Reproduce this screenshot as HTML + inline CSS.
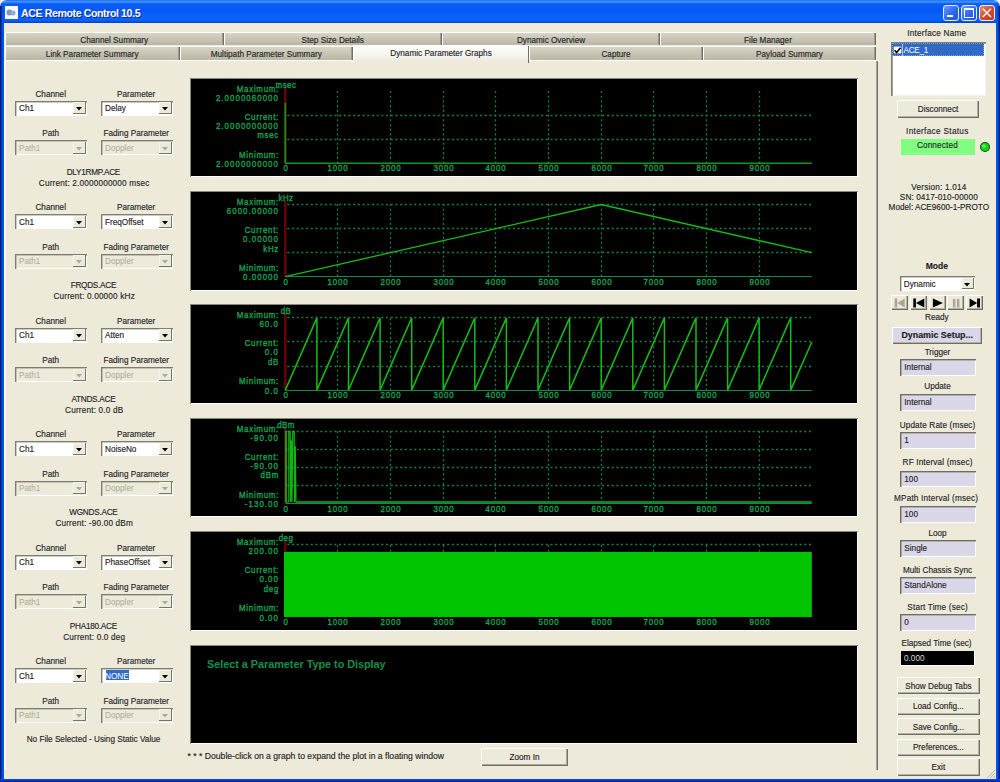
<!DOCTYPE html><html><head><meta charset="utf-8"><style>
html,body{margin:0;padding:0;width:1000px;height:782px;overflow:hidden;background:#EDEADA;}
.t{position:absolute;z-index:5;white-space:nowrap;line-height:0;font-family:"Liberation Sans", sans-serif;}
.r{position:absolute;box-sizing:border-box;}
</style></head><body>
<div class="r" style="left:0px;top:0px;width:1000px;height:782px;background:#EDEADA;"></div>
<div class="r" style="left:0px;top:0px;width:1000px;height:23px;background:linear-gradient(to bottom,#1F6CF0 0%,#3C8EFF 6%,#3A8AFF 10%,#0A5EF6 16%,#0558F2 45%,#0A62FA 70%,#0A62FA 88%,#0040C8 100%);border-radius:7px 7px 0 0;"></div>
<div class="r" style="left:0px;top:6px;width:4px;height:776px;background:linear-gradient(to right,#0A1E78 0%,#0A1E78 35%,#0050E0 40%,#0058EE 100%);"></div>
<div class="r" style="left:996px;top:6px;width:4px;height:776px;background:linear-gradient(to left,#0A1E78 0%,#0A1E78 35%,#0050E0 40%,#0058EE 100%);"></div>
<div class="r" style="left:0px;top:779px;width:1000px;height:3px;background:linear-gradient(to bottom,#0055E5,#0019A8);"></div>
<div class="r" style="left:5px;top:6px;width:13px;height:13px;background:#F8F8FF;"></div>
<svg style="position:absolute;left:6px;top:8px" width="11" height="9"><circle cx="3.5" cy="4.5" r="3" fill="#7E95C8"/><circle cx="7" cy="5" r="2.5" fill="#97AAD8"/></svg>
<div class="t" style="left:21.00px;top:13.00px;font-size:10.6px;color:#fff;font-weight:bold;text-shadow:1px 1px 0 #0A2A9A;letter-spacing:-0.4px;">ACE Remote Control 10.5</div>
<div class="r" style="left:943px;top:5px;width:16px;height:16px;background:linear-gradient(135deg,#6F9BFF,#2B67F0 55%,#1F55DC);border:1px solid #E8EEFF;border-radius:3px;"></div>
<div class="r" style="left:961px;top:5px;width:16px;height:16px;background:linear-gradient(135deg,#6F9BFF,#2B67F0 55%,#1F55DC);border:1px solid #E8EEFF;border-radius:3px;"></div>
<div class="r" style="left:979px;top:5px;width:16px;height:16px;background:linear-gradient(135deg,#E88A6A,#D4492A 55%,#C83A1C);border:1px solid #E8EEFF;border-radius:3px;"></div>
<div class="r" style="left:947px;top:15px;width:6px;height:2px;background:#fff;"></div>
<div class="r" style="left:964px;top:8px;width:10px;height:10px;background:transparent;border:1px solid #fff;border-top:2px solid #fff;"></div>
<svg style="position:absolute;left:979px;top:5px" width="16" height="16"><path d="M3.8 3.8 L12 12 M12 3.8 L3.8 12" stroke="#fff" stroke-width="1.4"/></svg>
<div class="r" style="left:4px;top:60px;width:874px;height:710px;background:#EDEADA;box-shadow: inset 1.5px 1px 0 #fff, inset -1px 0 0 #716F64, inset -2px 0 0 #ACA899;"></div>
<div class="r" style="left:5px;top:32px;width:871px;height:1px;background:#fff;"></div>
<div class="r" style="left:5px;top:32px;width:218.5px;height:13px;background:linear-gradient(to bottom,#DAD7C8,#C9C6B6 50%,#BAB6A6);box-shadow: inset 1px 1px 0 #fff, inset -1px 0 0 #716F64, inset -2px 0 0 #9D9A8C;"></div>
<div class="t" style="left:-85.75px;width:400px;text-align:center;top:41.00px;font-size:8.2px;color:#1A1A1A;font-weight:normal;-webkit-text-stroke:0.15px #333;">Channel Summary</div>
<div class="r" style="left:223.5px;top:32px;width:218.5px;height:13px;background:linear-gradient(to bottom,#DAD7C8,#C9C6B6 50%,#BAB6A6);box-shadow: inset 1px 1px 0 #fff, inset -1px 0 0 #716F64, inset -2px 0 0 #9D9A8C;"></div>
<div class="t" style="left:132.75px;width:400px;text-align:center;top:41.00px;font-size:8.2px;color:#1A1A1A;font-weight:normal;-webkit-text-stroke:0.15px #333;">Step Size Details</div>
<div class="r" style="left:442px;top:32px;width:218px;height:13px;background:linear-gradient(to bottom,#DAD7C8,#C9C6B6 50%,#BAB6A6);box-shadow: inset 1px 1px 0 #fff, inset -1px 0 0 #716F64, inset -2px 0 0 #9D9A8C;"></div>
<div class="t" style="left:351.00px;width:400px;text-align:center;top:41.00px;font-size:8.2px;color:#1A1A1A;font-weight:normal;-webkit-text-stroke:0.15px #333;">Dynamic Overview</div>
<div class="r" style="left:660px;top:32px;width:216px;height:13px;background:linear-gradient(to bottom,#DAD7C8,#C9C6B6 50%,#BAB6A6);box-shadow: inset 1px 1px 0 #fff, inset -1px 0 0 #716F64, inset -2px 0 0 #9D9A8C;"></div>
<div class="t" style="left:568.00px;width:400px;text-align:center;top:41.00px;font-size:8.2px;color:#1A1A1A;font-weight:normal;-webkit-text-stroke:0.15px #333;">File Manager</div>
<div class="r" style="left:5px;top:46px;width:174.5px;height:13.5px;background:linear-gradient(to bottom,#DAD7C8,#C9C6B6 50%,#BAB6A6);box-shadow: inset 1px 1px 0 #fff, inset -1px 0 0 #716F64, inset -2px 0 0 #9D9A8C;"></div>
<div class="t" style="left:-107.75px;width:400px;text-align:center;top:55.00px;font-size:8.2px;color:#1A1A1A;font-weight:normal;-webkit-text-stroke:0.15px #333;">Link Parameter Summary</div>
<div class="r" style="left:179.5px;top:46px;width:173.5px;height:13.5px;background:linear-gradient(to bottom,#DAD7C8,#C9C6B6 50%,#BAB6A6);box-shadow: inset 1px 1px 0 #fff, inset -1px 0 0 #716F64, inset -2px 0 0 #9D9A8C;"></div>
<div class="t" style="left:66.25px;width:400px;text-align:center;top:55.00px;font-size:8.2px;color:#1A1A1A;font-weight:normal;-webkit-text-stroke:0.15px #333;">Multipath Parameter Summary</div>
<div class="r" style="left:529px;top:46px;width:174px;height:13.5px;background:linear-gradient(to bottom,#DAD7C8,#C9C6B6 50%,#BAB6A6);box-shadow: inset 1px 1px 0 #fff, inset -1px 0 0 #716F64, inset -2px 0 0 #9D9A8C;"></div>
<div class="t" style="left:416.00px;width:400px;text-align:center;top:55.00px;font-size:8.2px;color:#1A1A1A;font-weight:normal;-webkit-text-stroke:0.15px #333;">Capture</div>
<div class="r" style="left:703px;top:46px;width:173px;height:13.5px;background:linear-gradient(to bottom,#DAD7C8,#C9C6B6 50%,#BAB6A6);box-shadow: inset 1px 1px 0 #fff, inset -1px 0 0 #716F64, inset -2px 0 0 #9D9A8C;"></div>
<div class="t" style="left:589.50px;width:400px;text-align:center;top:55.00px;font-size:8.2px;color:#1A1A1A;font-weight:normal;-webkit-text-stroke:0.15px #333;">Payload Summary</div>
<div class="r" style="left:353px;top:44.5px;width:176px;height:18.5px;background:linear-gradient(to bottom,#FFFFFF,#F7F6F1 50%,#ECE9D8);box-shadow: inset 1px 1px 0 #fff, inset -1px 0 0 #716F64;"></div>
<div class="t" style="left:241.00px;width:400px;text-align:center;top:54.00px;font-size:8.2px;color:#1A1A1A;font-weight:normal;-webkit-text-stroke:0.15px #333;">Dynamic Parameter Graphs</div>
<div class="t" style="left:-149.30px;width:400px;text-align:center;top:95.00px;font-size:8.2px;color:#1A1A1A;font-weight:normal;-webkit-text-stroke:0.15px #333;">Channel</div>
<div class="t" style="left:-63.80px;width:400px;text-align:center;top:95.00px;font-size:8.2px;color:#1A1A1A;font-weight:normal;-webkit-text-stroke:0.15px #333;">Parameter</div>
<div class="r" style="left:15px;top:100.6px;width:71.5px;height:15.400000000000006px;background:#FFFFFF;box-shadow: inset 1px 1px 0 #7F7D70, inset 1.5px 1.5px 0 #9A988B, inset -1px -1px 0 #FFFFFF;"></div>
<div class="r" style="left:73.0px;top:102.1px;width:12.5px;height:12.400000000000006px;background:#EDEADA;box-shadow: inset -1px -1px 0 #77756A, inset 1px 1px 0 #F4F3EC;"></div>
<svg style="position:absolute;left:75.75px;top:107.30px" width="6" height="4"><path d="M0 0 L6 0 L3 3.6 Z" fill="#000"/></svg>
<div class="t" style="left:19.00px;top:109.00px;font-size:8.2px;color:#1A1A1A;font-weight:normal;-webkit-text-stroke:0.15px #333;">Ch1</div>
<div class="r" style="left:101px;top:100.6px;width:71.5px;height:15.400000000000006px;background:#FFFFFF;box-shadow: inset 1px 1px 0 #7F7D70, inset 1.5px 1.5px 0 #9A988B, inset -1px -1px 0 #FFFFFF;"></div>
<div class="r" style="left:159.0px;top:102.1px;width:12.5px;height:12.400000000000006px;background:#EDEADA;box-shadow: inset -1px -1px 0 #77756A, inset 1px 1px 0 #F4F3EC;"></div>
<svg style="position:absolute;left:161.75px;top:107.30px" width="6" height="4"><path d="M0 0 L6 0 L3 3.6 Z" fill="#000"/></svg>
<div class="t" style="left:105.00px;top:109.00px;font-size:8.2px;color:#1A1A1A;font-weight:normal;-webkit-text-stroke:0.15px #333;">Delay</div>
<div class="t" style="left:-149.30px;width:400px;text-align:center;top:134.00px;font-size:8.2px;color:#1A1A1A;font-weight:normal;-webkit-text-stroke:0.15px #333;">Path</div>
<div class="t" style="left:-63.80px;width:400px;text-align:center;top:134.00px;font-size:8.2px;color:#1A1A1A;font-weight:normal;-webkit-text-stroke:0.15px #333;">Fading Parameter</div>
<div class="r" style="left:15px;top:140.0px;width:71.5px;height:15.400000000000006px;background:#EDEADA;box-shadow: inset 1px 1px 0 #7F7D70, inset 1.5px 1.5px 0 #9A988B, inset -1px -1px 0 #FFFFFF;"></div>
<div class="r" style="left:73.0px;top:141.5px;width:12.5px;height:12.400000000000006px;background:#EDEADA;box-shadow: inset -1px -1px 0 #77756A, inset 1px 1px 0 #F4F3EC;"></div>
<svg style="position:absolute;left:75.75px;top:146.70px" width="6" height="4"><path d="M0 0 L6 0 L3 3.6 Z" fill="#ACA899"/></svg>
<div class="t" style="left:19.00px;top:149.00px;font-size:8.2px;color:#ACA899;font-weight:normal;">Path1</div>
<div class="r" style="left:101px;top:140.0px;width:71.5px;height:15.400000000000006px;background:#EDEADA;box-shadow: inset 1px 1px 0 #7F7D70, inset 1.5px 1.5px 0 #9A988B, inset -1px -1px 0 #FFFFFF;"></div>
<div class="r" style="left:159.0px;top:141.5px;width:12.5px;height:12.400000000000006px;background:#EDEADA;box-shadow: inset -1px -1px 0 #77756A, inset 1px 1px 0 #F4F3EC;"></div>
<svg style="position:absolute;left:161.75px;top:146.70px" width="6" height="4"><path d="M0 0 L6 0 L3 3.6 Z" fill="#ACA899"/></svg>
<div class="t" style="left:105.00px;top:149.00px;font-size:8.2px;color:#ACA899;font-weight:normal;">Doppler</div>
<div class="t" style="left:-106.62px;width:400px;text-align:center;top:173.00px;font-size:8.2px;color:#1A1A1A;font-weight:normal;letter-spacing:-0.25px;-webkit-text-stroke:0.15px #333;">DLY1RMP.ACE</div>
<div class="t" style="left:-105.81px;width:400px;text-align:center;top:184.00px;font-size:8.2px;color:#1A1A1A;font-weight:normal;letter-spacing:0.18px;-webkit-text-stroke:0.15px #333;">Current: 2.0000000000 msec</div>
<div class="t" style="left:-149.30px;width:400px;text-align:center;top:208.00px;font-size:8.2px;color:#1A1A1A;font-weight:normal;-webkit-text-stroke:0.15px #333;">Channel</div>
<div class="t" style="left:-63.80px;width:400px;text-align:center;top:208.00px;font-size:8.2px;color:#1A1A1A;font-weight:normal;-webkit-text-stroke:0.15px #333;">Parameter</div>
<div class="r" style="left:15px;top:214.1px;width:71.5px;height:15.400000000000006px;background:#FFFFFF;box-shadow: inset 1px 1px 0 #7F7D70, inset 1.5px 1.5px 0 #9A988B, inset -1px -1px 0 #FFFFFF;"></div>
<div class="r" style="left:73.0px;top:215.6px;width:12.5px;height:12.400000000000006px;background:#EDEADA;box-shadow: inset -1px -1px 0 #77756A, inset 1px 1px 0 #F4F3EC;"></div>
<svg style="position:absolute;left:75.75px;top:220.80px" width="6" height="4"><path d="M0 0 L6 0 L3 3.6 Z" fill="#000"/></svg>
<div class="t" style="left:19.00px;top:223.00px;font-size:8.2px;color:#1A1A1A;font-weight:normal;-webkit-text-stroke:0.15px #333;">Ch1</div>
<div class="r" style="left:101px;top:214.1px;width:71.5px;height:15.400000000000006px;background:#FFFFFF;box-shadow: inset 1px 1px 0 #7F7D70, inset 1.5px 1.5px 0 #9A988B, inset -1px -1px 0 #FFFFFF;"></div>
<div class="r" style="left:159.0px;top:215.6px;width:12.5px;height:12.400000000000006px;background:#EDEADA;box-shadow: inset -1px -1px 0 #77756A, inset 1px 1px 0 #F4F3EC;"></div>
<svg style="position:absolute;left:161.75px;top:220.80px" width="6" height="4"><path d="M0 0 L6 0 L3 3.6 Z" fill="#000"/></svg>
<div class="t" style="left:105.00px;top:223.00px;font-size:8.2px;color:#1A1A1A;font-weight:normal;-webkit-text-stroke:0.15px #333;">FreqOffset</div>
<div class="t" style="left:-149.30px;width:400px;text-align:center;top:248.00px;font-size:8.2px;color:#1A1A1A;font-weight:normal;-webkit-text-stroke:0.15px #333;">Path</div>
<div class="t" style="left:-63.80px;width:400px;text-align:center;top:248.00px;font-size:8.2px;color:#1A1A1A;font-weight:normal;-webkit-text-stroke:0.15px #333;">Fading Parameter</div>
<div class="r" style="left:15px;top:253.5px;width:71.5px;height:15.399999999999977px;background:#EDEADA;box-shadow: inset 1px 1px 0 #7F7D70, inset 1.5px 1.5px 0 #9A988B, inset -1px -1px 0 #FFFFFF;"></div>
<div class="r" style="left:73.0px;top:255.0px;width:12.5px;height:12.399999999999977px;background:#EDEADA;box-shadow: inset -1px -1px 0 #77756A, inset 1px 1px 0 #F4F3EC;"></div>
<svg style="position:absolute;left:75.75px;top:260.20px" width="6" height="4"><path d="M0 0 L6 0 L3 3.6 Z" fill="#ACA899"/></svg>
<div class="t" style="left:19.00px;top:262.00px;font-size:8.2px;color:#ACA899;font-weight:normal;">Path1</div>
<div class="r" style="left:101px;top:253.5px;width:71.5px;height:15.399999999999977px;background:#EDEADA;box-shadow: inset 1px 1px 0 #7F7D70, inset 1.5px 1.5px 0 #9A988B, inset -1px -1px 0 #FFFFFF;"></div>
<div class="r" style="left:159.0px;top:255.0px;width:12.5px;height:12.399999999999977px;background:#EDEADA;box-shadow: inset -1px -1px 0 #77756A, inset 1px 1px 0 #F4F3EC;"></div>
<svg style="position:absolute;left:161.75px;top:260.20px" width="6" height="4"><path d="M0 0 L6 0 L3 3.6 Z" fill="#ACA899"/></svg>
<div class="t" style="left:105.00px;top:262.00px;font-size:8.2px;color:#ACA899;font-weight:normal;">Doppler</div>
<div class="t" style="left:-106.62px;width:400px;text-align:center;top:286.00px;font-size:8.2px;color:#1A1A1A;font-weight:normal;letter-spacing:-0.25px;-webkit-text-stroke:0.15px #333;">FRQDS.ACE</div>
<div class="t" style="left:-105.81px;width:400px;text-align:center;top:297.00px;font-size:8.2px;color:#1A1A1A;font-weight:normal;letter-spacing:0.18px;-webkit-text-stroke:0.15px #333;">Current: 0.00000 kHz</div>
<div class="t" style="left:-149.30px;width:400px;text-align:center;top:322.00px;font-size:8.2px;color:#1A1A1A;font-weight:normal;-webkit-text-stroke:0.15px #333;">Channel</div>
<div class="t" style="left:-63.80px;width:400px;text-align:center;top:322.00px;font-size:8.2px;color:#1A1A1A;font-weight:normal;-webkit-text-stroke:0.15px #333;">Parameter</div>
<div class="r" style="left:15px;top:327.6px;width:71.5px;height:15.399999999999977px;background:#FFFFFF;box-shadow: inset 1px 1px 0 #7F7D70, inset 1.5px 1.5px 0 #9A988B, inset -1px -1px 0 #FFFFFF;"></div>
<div class="r" style="left:73.0px;top:329.1px;width:12.5px;height:12.399999999999977px;background:#EDEADA;box-shadow: inset -1px -1px 0 #77756A, inset 1px 1px 0 #F4F3EC;"></div>
<svg style="position:absolute;left:75.75px;top:334.30px" width="6" height="4"><path d="M0 0 L6 0 L3 3.6 Z" fill="#000"/></svg>
<div class="t" style="left:19.00px;top:336.00px;font-size:8.2px;color:#1A1A1A;font-weight:normal;-webkit-text-stroke:0.15px #333;">Ch1</div>
<div class="r" style="left:101px;top:327.6px;width:71.5px;height:15.399999999999977px;background:#FFFFFF;box-shadow: inset 1px 1px 0 #7F7D70, inset 1.5px 1.5px 0 #9A988B, inset -1px -1px 0 #FFFFFF;"></div>
<div class="r" style="left:159.0px;top:329.1px;width:12.5px;height:12.399999999999977px;background:#EDEADA;box-shadow: inset -1px -1px 0 #77756A, inset 1px 1px 0 #F4F3EC;"></div>
<svg style="position:absolute;left:161.75px;top:334.30px" width="6" height="4"><path d="M0 0 L6 0 L3 3.6 Z" fill="#000"/></svg>
<div class="t" style="left:105.00px;top:336.00px;font-size:8.2px;color:#1A1A1A;font-weight:normal;-webkit-text-stroke:0.15px #333;">Atten</div>
<div class="t" style="left:-149.30px;width:400px;text-align:center;top:361.00px;font-size:8.2px;color:#1A1A1A;font-weight:normal;-webkit-text-stroke:0.15px #333;">Path</div>
<div class="t" style="left:-63.80px;width:400px;text-align:center;top:361.00px;font-size:8.2px;color:#1A1A1A;font-weight:normal;-webkit-text-stroke:0.15px #333;">Fading Parameter</div>
<div class="r" style="left:15px;top:367.0px;width:71.5px;height:15.399999999999977px;background:#EDEADA;box-shadow: inset 1px 1px 0 #7F7D70, inset 1.5px 1.5px 0 #9A988B, inset -1px -1px 0 #FFFFFF;"></div>
<div class="r" style="left:73.0px;top:368.5px;width:12.5px;height:12.399999999999977px;background:#EDEADA;box-shadow: inset -1px -1px 0 #77756A, inset 1px 1px 0 #F4F3EC;"></div>
<svg style="position:absolute;left:75.75px;top:373.70px" width="6" height="4"><path d="M0 0 L6 0 L3 3.6 Z" fill="#ACA899"/></svg>
<div class="t" style="left:19.00px;top:376.00px;font-size:8.2px;color:#ACA899;font-weight:normal;">Path1</div>
<div class="r" style="left:101px;top:367.0px;width:71.5px;height:15.399999999999977px;background:#EDEADA;box-shadow: inset 1px 1px 0 #7F7D70, inset 1.5px 1.5px 0 #9A988B, inset -1px -1px 0 #FFFFFF;"></div>
<div class="r" style="left:159.0px;top:368.5px;width:12.5px;height:12.399999999999977px;background:#EDEADA;box-shadow: inset -1px -1px 0 #77756A, inset 1px 1px 0 #F4F3EC;"></div>
<svg style="position:absolute;left:161.75px;top:373.70px" width="6" height="4"><path d="M0 0 L6 0 L3 3.6 Z" fill="#ACA899"/></svg>
<div class="t" style="left:105.00px;top:376.00px;font-size:8.2px;color:#ACA899;font-weight:normal;">Doppler</div>
<div class="t" style="left:-106.62px;width:400px;text-align:center;top:400.00px;font-size:8.2px;color:#1A1A1A;font-weight:normal;letter-spacing:-0.25px;-webkit-text-stroke:0.15px #333;">ATNDS.ACE</div>
<div class="t" style="left:-105.81px;width:400px;text-align:center;top:411.00px;font-size:8.2px;color:#1A1A1A;font-weight:normal;letter-spacing:0.18px;-webkit-text-stroke:0.15px #333;">Current: 0.0 dB</div>
<div class="t" style="left:-149.30px;width:400px;text-align:center;top:435.00px;font-size:8.2px;color:#1A1A1A;font-weight:normal;-webkit-text-stroke:0.15px #333;">Channel</div>
<div class="t" style="left:-63.80px;width:400px;text-align:center;top:435.00px;font-size:8.2px;color:#1A1A1A;font-weight:normal;-webkit-text-stroke:0.15px #333;">Parameter</div>
<div class="r" style="left:15px;top:441.1px;width:71.5px;height:15.399999999999977px;background:#FFFFFF;box-shadow: inset 1px 1px 0 #7F7D70, inset 1.5px 1.5px 0 #9A988B, inset -1px -1px 0 #FFFFFF;"></div>
<div class="r" style="left:73.0px;top:442.6px;width:12.5px;height:12.399999999999977px;background:#EDEADA;box-shadow: inset -1px -1px 0 #77756A, inset 1px 1px 0 #F4F3EC;"></div>
<svg style="position:absolute;left:75.75px;top:447.80px" width="6" height="4"><path d="M0 0 L6 0 L3 3.6 Z" fill="#000"/></svg>
<div class="t" style="left:19.00px;top:450.00px;font-size:8.2px;color:#1A1A1A;font-weight:normal;-webkit-text-stroke:0.15px #333;">Ch1</div>
<div class="r" style="left:101px;top:441.1px;width:71.5px;height:15.399999999999977px;background:#FFFFFF;box-shadow: inset 1px 1px 0 #7F7D70, inset 1.5px 1.5px 0 #9A988B, inset -1px -1px 0 #FFFFFF;"></div>
<div class="r" style="left:159.0px;top:442.6px;width:12.5px;height:12.399999999999977px;background:#EDEADA;box-shadow: inset -1px -1px 0 #77756A, inset 1px 1px 0 #F4F3EC;"></div>
<svg style="position:absolute;left:161.75px;top:447.80px" width="6" height="4"><path d="M0 0 L6 0 L3 3.6 Z" fill="#000"/></svg>
<div class="t" style="left:105.00px;top:450.00px;font-size:8.2px;color:#1A1A1A;font-weight:normal;-webkit-text-stroke:0.15px #333;">NoiseNo</div>
<div class="t" style="left:-149.30px;width:400px;text-align:center;top:475.00px;font-size:8.2px;color:#1A1A1A;font-weight:normal;-webkit-text-stroke:0.15px #333;">Path</div>
<div class="t" style="left:-63.80px;width:400px;text-align:center;top:475.00px;font-size:8.2px;color:#1A1A1A;font-weight:normal;-webkit-text-stroke:0.15px #333;">Fading Parameter</div>
<div class="r" style="left:15px;top:480.5px;width:71.5px;height:15.399999999999977px;background:#EDEADA;box-shadow: inset 1px 1px 0 #7F7D70, inset 1.5px 1.5px 0 #9A988B, inset -1px -1px 0 #FFFFFF;"></div>
<div class="r" style="left:73.0px;top:482.0px;width:12.5px;height:12.399999999999977px;background:#EDEADA;box-shadow: inset -1px -1px 0 #77756A, inset 1px 1px 0 #F4F3EC;"></div>
<svg style="position:absolute;left:75.75px;top:487.20px" width="6" height="4"><path d="M0 0 L6 0 L3 3.6 Z" fill="#ACA899"/></svg>
<div class="t" style="left:19.00px;top:489.00px;font-size:8.2px;color:#ACA899;font-weight:normal;">Path1</div>
<div class="r" style="left:101px;top:480.5px;width:71.5px;height:15.399999999999977px;background:#EDEADA;box-shadow: inset 1px 1px 0 #7F7D70, inset 1.5px 1.5px 0 #9A988B, inset -1px -1px 0 #FFFFFF;"></div>
<div class="r" style="left:159.0px;top:482.0px;width:12.5px;height:12.399999999999977px;background:#EDEADA;box-shadow: inset -1px -1px 0 #77756A, inset 1px 1px 0 #F4F3EC;"></div>
<svg style="position:absolute;left:161.75px;top:487.20px" width="6" height="4"><path d="M0 0 L6 0 L3 3.6 Z" fill="#ACA899"/></svg>
<div class="t" style="left:105.00px;top:489.00px;font-size:8.2px;color:#ACA899;font-weight:normal;">Doppler</div>
<div class="t" style="left:-106.62px;width:400px;text-align:center;top:513.00px;font-size:8.2px;color:#1A1A1A;font-weight:normal;letter-spacing:-0.25px;-webkit-text-stroke:0.15px #333;">WGNDS.ACE</div>
<div class="t" style="left:-105.81px;width:400px;text-align:center;top:524.00px;font-size:8.2px;color:#1A1A1A;font-weight:normal;letter-spacing:0.18px;-webkit-text-stroke:0.15px #333;">Current: -90.00 dBm</div>
<div class="t" style="left:-149.30px;width:400px;text-align:center;top:549.00px;font-size:8.2px;color:#1A1A1A;font-weight:normal;-webkit-text-stroke:0.15px #333;">Channel</div>
<div class="t" style="left:-63.80px;width:400px;text-align:center;top:549.00px;font-size:8.2px;color:#1A1A1A;font-weight:normal;-webkit-text-stroke:0.15px #333;">Parameter</div>
<div class="r" style="left:15px;top:554.6px;width:71.5px;height:15.399999999999977px;background:#FFFFFF;box-shadow: inset 1px 1px 0 #7F7D70, inset 1.5px 1.5px 0 #9A988B, inset -1px -1px 0 #FFFFFF;"></div>
<div class="r" style="left:73.0px;top:556.1px;width:12.5px;height:12.399999999999977px;background:#EDEADA;box-shadow: inset -1px -1px 0 #77756A, inset 1px 1px 0 #F4F3EC;"></div>
<svg style="position:absolute;left:75.75px;top:561.30px" width="6" height="4"><path d="M0 0 L6 0 L3 3.6 Z" fill="#000"/></svg>
<div class="t" style="left:19.00px;top:563.00px;font-size:8.2px;color:#1A1A1A;font-weight:normal;-webkit-text-stroke:0.15px #333;">Ch1</div>
<div class="r" style="left:101px;top:554.6px;width:71.5px;height:15.399999999999977px;background:#FFFFFF;box-shadow: inset 1px 1px 0 #7F7D70, inset 1.5px 1.5px 0 #9A988B, inset -1px -1px 0 #FFFFFF;"></div>
<div class="r" style="left:159.0px;top:556.1px;width:12.5px;height:12.399999999999977px;background:#EDEADA;box-shadow: inset -1px -1px 0 #77756A, inset 1px 1px 0 #F4F3EC;"></div>
<svg style="position:absolute;left:161.75px;top:561.30px" width="6" height="4"><path d="M0 0 L6 0 L3 3.6 Z" fill="#000"/></svg>
<div class="t" style="left:105.00px;top:563.00px;font-size:8.2px;color:#1A1A1A;font-weight:normal;-webkit-text-stroke:0.15px #333;">PhaseOffset</div>
<div class="t" style="left:-149.30px;width:400px;text-align:center;top:588.00px;font-size:8.2px;color:#1A1A1A;font-weight:normal;-webkit-text-stroke:0.15px #333;">Path</div>
<div class="t" style="left:-63.80px;width:400px;text-align:center;top:588.00px;font-size:8.2px;color:#1A1A1A;font-weight:normal;-webkit-text-stroke:0.15px #333;">Fading Parameter</div>
<div class="r" style="left:15px;top:594.0px;width:71.5px;height:15.399999999999977px;background:#EDEADA;box-shadow: inset 1px 1px 0 #7F7D70, inset 1.5px 1.5px 0 #9A988B, inset -1px -1px 0 #FFFFFF;"></div>
<div class="r" style="left:73.0px;top:595.5px;width:12.5px;height:12.399999999999977px;background:#EDEADA;box-shadow: inset -1px -1px 0 #77756A, inset 1px 1px 0 #F4F3EC;"></div>
<svg style="position:absolute;left:75.75px;top:600.70px" width="6" height="4"><path d="M0 0 L6 0 L3 3.6 Z" fill="#ACA899"/></svg>
<div class="t" style="left:19.00px;top:603.00px;font-size:8.2px;color:#ACA899;font-weight:normal;">Path1</div>
<div class="r" style="left:101px;top:594.0px;width:71.5px;height:15.399999999999977px;background:#EDEADA;box-shadow: inset 1px 1px 0 #7F7D70, inset 1.5px 1.5px 0 #9A988B, inset -1px -1px 0 #FFFFFF;"></div>
<div class="r" style="left:159.0px;top:595.5px;width:12.5px;height:12.399999999999977px;background:#EDEADA;box-shadow: inset -1px -1px 0 #77756A, inset 1px 1px 0 #F4F3EC;"></div>
<svg style="position:absolute;left:161.75px;top:600.70px" width="6" height="4"><path d="M0 0 L6 0 L3 3.6 Z" fill="#ACA899"/></svg>
<div class="t" style="left:105.00px;top:603.00px;font-size:8.2px;color:#ACA899;font-weight:normal;">Doppler</div>
<div class="t" style="left:-106.62px;width:400px;text-align:center;top:627.00px;font-size:8.2px;color:#1A1A1A;font-weight:normal;letter-spacing:-0.25px;-webkit-text-stroke:0.15px #333;">PHA180.ACE</div>
<div class="t" style="left:-105.81px;width:400px;text-align:center;top:638.00px;font-size:8.2px;color:#1A1A1A;font-weight:normal;letter-spacing:0.18px;-webkit-text-stroke:0.15px #333;">Current: 0.0 deg</div>
<div class="t" style="left:-149.30px;width:400px;text-align:center;top:662.00px;font-size:8.2px;color:#1A1A1A;font-weight:normal;-webkit-text-stroke:0.15px #333;">Channel</div>
<div class="t" style="left:-63.80px;width:400px;text-align:center;top:662.00px;font-size:8.2px;color:#1A1A1A;font-weight:normal;-webkit-text-stroke:0.15px #333;">Parameter</div>
<div class="r" style="left:15px;top:668.1px;width:71.5px;height:15.399999999999977px;background:#FFFFFF;box-shadow: inset 1px 1px 0 #7F7D70, inset 1.5px 1.5px 0 #9A988B, inset -1px -1px 0 #FFFFFF;"></div>
<div class="r" style="left:73.0px;top:669.6px;width:12.5px;height:12.399999999999977px;background:#EDEADA;box-shadow: inset -1px -1px 0 #77756A, inset 1px 1px 0 #F4F3EC;"></div>
<svg style="position:absolute;left:75.75px;top:674.80px" width="6" height="4"><path d="M0 0 L6 0 L3 3.6 Z" fill="#000"/></svg>
<div class="t" style="left:19.00px;top:677.00px;font-size:8.2px;color:#1A1A1A;font-weight:normal;-webkit-text-stroke:0.15px #333;">Ch1</div>
<div class="r" style="left:101px;top:668.1px;width:71.5px;height:15.399999999999977px;background:#FFFFFF;box-shadow: inset 1px 1px 0 #7F7D70, inset 1.5px 1.5px 0 #9A988B, inset -1px -1px 0 #FFFFFF;"></div>
<div class="r" style="left:159.0px;top:669.6px;width:12.5px;height:12.399999999999977px;background:#EDEADA;box-shadow: inset -1px -1px 0 #77756A, inset 1px 1px 0 #F4F3EC;"></div>
<svg style="position:absolute;left:161.75px;top:674.80px" width="6" height="4"><path d="M0 0 L6 0 L3 3.6 Z" fill="#000"/></svg>
<div class="r" style="left:106px;top:670.1px;width:22.5px;height:10.399999999999977px;background:#316AC5;"></div>
<div class="t" style="left:105.00px;top:677.00px;font-size:8.2px;color:#fff;font-weight:normal;">NONE</div>
<div class="t" style="left:-149.30px;width:400px;text-align:center;top:702.00px;font-size:8.2px;color:#1A1A1A;font-weight:normal;-webkit-text-stroke:0.15px #333;">Path</div>
<div class="t" style="left:-63.80px;width:400px;text-align:center;top:702.00px;font-size:8.2px;color:#1A1A1A;font-weight:normal;-webkit-text-stroke:0.15px #333;">Fading Parameter</div>
<div class="r" style="left:15px;top:707.5px;width:71.5px;height:15.399999999999977px;background:#EDEADA;box-shadow: inset 1px 1px 0 #7F7D70, inset 1.5px 1.5px 0 #9A988B, inset -1px -1px 0 #FFFFFF;"></div>
<div class="r" style="left:73.0px;top:709.0px;width:12.5px;height:12.399999999999977px;background:#EDEADA;box-shadow: inset -1px -1px 0 #77756A, inset 1px 1px 0 #F4F3EC;"></div>
<svg style="position:absolute;left:75.75px;top:714.20px" width="6" height="4"><path d="M0 0 L6 0 L3 3.6 Z" fill="#ACA899"/></svg>
<div class="t" style="left:19.00px;top:716.00px;font-size:8.2px;color:#ACA899;font-weight:normal;">Path1</div>
<div class="r" style="left:101px;top:707.5px;width:71.5px;height:15.399999999999977px;background:#EDEADA;box-shadow: inset 1px 1px 0 #7F7D70, inset 1.5px 1.5px 0 #9A988B, inset -1px -1px 0 #FFFFFF;"></div>
<div class="r" style="left:159.0px;top:709.0px;width:12.5px;height:12.399999999999977px;background:#EDEADA;box-shadow: inset -1px -1px 0 #77756A, inset 1px 1px 0 #F4F3EC;"></div>
<svg style="position:absolute;left:161.75px;top:714.20px" width="6" height="4"><path d="M0 0 L6 0 L3 3.6 Z" fill="#ACA899"/></svg>
<div class="t" style="left:105.00px;top:716.00px;font-size:8.2px;color:#ACA899;font-weight:normal;">Doppler</div>
<div class="t" style="left:-106.50px;width:400px;text-align:center;top:740.00px;font-size:8.2px;color:#1A1A1A;font-weight:normal;-webkit-text-stroke:0.15px #333;">No File Selected - Using Static Value</div>
<div class="r" style="left:190px;top:78px;width:668px;height:99px;background:#000;box-shadow: inset 1px 1px 0 #8A887C, inset -1px -1px 0 #FFFFFF;"></div>
<div class="t" style="left:85.55px;width:400px;text-align:center;top:85.00px;font-size:9.6px;color:#18A050;font-weight:normal;letter-spacing:0.6px;-webkit-text-stroke:0.4px #18A050;transform:scaleX(0.82);transform-origin:center center;">msec</div>
<div class="t" style="left:-121.26px;width:400px;text-align:right;top:89.00px;font-size:9.6px;color:#18A050;font-weight:normal;letter-spacing:0.9px;-webkit-text-stroke:0.4px #18A050;transform:scaleX(0.82);transform-origin:right center;">Maximum:</div>
<div class="t" style="left:-120.93px;width:400px;text-align:right;top:98.00px;font-size:9.6px;color:#18A050;font-weight:normal;letter-spacing:1.3px;-webkit-text-stroke:0.4px #18A050;transform:scaleX(0.82);transform-origin:right center;">2.0000060000</div>
<div class="t" style="left:-121.26px;width:400px;text-align:right;top:117.00px;font-size:9.6px;color:#18A050;font-weight:normal;letter-spacing:0.9px;-webkit-text-stroke:0.4px #18A050;transform:scaleX(0.82);transform-origin:right center;">Current:</div>
<div class="t" style="left:-120.93px;width:400px;text-align:right;top:126.00px;font-size:9.6px;color:#18A050;font-weight:normal;letter-spacing:1.3px;-webkit-text-stroke:0.4px #18A050;transform:scaleX(0.82);transform-origin:right center;">2.0000000000</div>
<div class="t" style="left:-121.26px;width:400px;text-align:right;top:135.00px;font-size:9.6px;color:#18A050;font-weight:normal;letter-spacing:0.9px;-webkit-text-stroke:0.4px #18A050;transform:scaleX(0.82);transform-origin:right center;">msec</div>
<div class="t" style="left:-121.26px;width:400px;text-align:right;top:155.00px;font-size:9.6px;color:#18A050;font-weight:normal;letter-spacing:0.9px;-webkit-text-stroke:0.4px #18A050;transform:scaleX(0.82);transform-origin:right center;">Minimum:</div>
<div class="t" style="left:-120.93px;width:400px;text-align:right;top:164.00px;font-size:9.6px;color:#18A050;font-weight:normal;letter-spacing:1.3px;-webkit-text-stroke:0.4px #18A050;transform:scaleX(0.82);transform-origin:right center;">2.0000000000</div>
<div class="t" style="left:85.71px;width:400px;text-align:center;top:168.00px;font-size:9.6px;color:#18A050;font-weight:normal;letter-spacing:1.0px;-webkit-text-stroke:0.4px #18A050;transform:scaleX(0.82);transform-origin:center center;">0</div>
<div class="t" style="left:138.36px;width:400px;text-align:center;top:168.00px;font-size:9.6px;color:#18A050;font-weight:normal;letter-spacing:1.0px;-webkit-text-stroke:0.4px #18A050;transform:scaleX(0.82);transform-origin:center center;">1000</div>
<div class="t" style="left:191.01px;width:400px;text-align:center;top:168.00px;font-size:9.6px;color:#18A050;font-weight:normal;letter-spacing:1.0px;-webkit-text-stroke:0.4px #18A050;transform:scaleX(0.82);transform-origin:center center;">2000</div>
<div class="t" style="left:243.66px;width:400px;text-align:center;top:168.00px;font-size:9.6px;color:#18A050;font-weight:normal;letter-spacing:1.0px;-webkit-text-stroke:0.4px #18A050;transform:scaleX(0.82);transform-origin:center center;">3000</div>
<div class="t" style="left:296.31px;width:400px;text-align:center;top:168.00px;font-size:9.6px;color:#18A050;font-weight:normal;letter-spacing:1.0px;-webkit-text-stroke:0.4px #18A050;transform:scaleX(0.82);transform-origin:center center;">4000</div>
<div class="t" style="left:348.96px;width:400px;text-align:center;top:168.00px;font-size:9.6px;color:#18A050;font-weight:normal;letter-spacing:1.0px;-webkit-text-stroke:0.4px #18A050;transform:scaleX(0.82);transform-origin:center center;">5000</div>
<div class="t" style="left:401.61px;width:400px;text-align:center;top:168.00px;font-size:9.6px;color:#18A050;font-weight:normal;letter-spacing:1.0px;-webkit-text-stroke:0.4px #18A050;transform:scaleX(0.82);transform-origin:center center;">6000</div>
<div class="t" style="left:454.26px;width:400px;text-align:center;top:168.00px;font-size:9.6px;color:#18A050;font-weight:normal;letter-spacing:1.0px;-webkit-text-stroke:0.4px #18A050;transform:scaleX(0.82);transform-origin:center center;">7000</div>
<div class="t" style="left:506.91px;width:400px;text-align:center;top:168.00px;font-size:9.6px;color:#18A050;font-weight:normal;letter-spacing:1.0px;-webkit-text-stroke:0.4px #18A050;transform:scaleX(0.82);transform-origin:center center;">8000</div>
<div class="t" style="left:559.56px;width:400px;text-align:center;top:168.00px;font-size:9.6px;color:#18A050;font-weight:normal;letter-spacing:1.0px;-webkit-text-stroke:0.4px #18A050;transform:scaleX(0.82);transform-origin:center center;">9000</div>
<div class="r" style="left:190px;top:191px;width:668px;height:100px;background:#000;box-shadow: inset 1px 1px 0 #8A887C, inset -1px -1px 0 #FFFFFF;"></div>
<div class="t" style="left:85.55px;width:400px;text-align:center;top:198.00px;font-size:9.6px;color:#18A050;font-weight:normal;letter-spacing:0.6px;-webkit-text-stroke:0.4px #18A050;transform:scaleX(0.82);transform-origin:center center;">kHz</div>
<div class="t" style="left:-121.26px;width:400px;text-align:right;top:202.00px;font-size:9.6px;color:#18A050;font-weight:normal;letter-spacing:0.9px;-webkit-text-stroke:0.4px #18A050;transform:scaleX(0.82);transform-origin:right center;">Maximum:</div>
<div class="t" style="left:-120.93px;width:400px;text-align:right;top:211.00px;font-size:9.6px;color:#18A050;font-weight:normal;letter-spacing:1.3px;-webkit-text-stroke:0.4px #18A050;transform:scaleX(0.82);transform-origin:right center;">6000.00000</div>
<div class="t" style="left:-121.26px;width:400px;text-align:right;top:230.00px;font-size:9.6px;color:#18A050;font-weight:normal;letter-spacing:0.9px;-webkit-text-stroke:0.4px #18A050;transform:scaleX(0.82);transform-origin:right center;">Current:</div>
<div class="t" style="left:-120.93px;width:400px;text-align:right;top:239.00px;font-size:9.6px;color:#18A050;font-weight:normal;letter-spacing:1.3px;-webkit-text-stroke:0.4px #18A050;transform:scaleX(0.82);transform-origin:right center;">0.00000</div>
<div class="t" style="left:-121.26px;width:400px;text-align:right;top:249.00px;font-size:9.6px;color:#18A050;font-weight:normal;letter-spacing:0.9px;-webkit-text-stroke:0.4px #18A050;transform:scaleX(0.82);transform-origin:right center;">kHz</div>
<div class="t" style="left:-121.26px;width:400px;text-align:right;top:268.00px;font-size:9.6px;color:#18A050;font-weight:normal;letter-spacing:0.9px;-webkit-text-stroke:0.4px #18A050;transform:scaleX(0.82);transform-origin:right center;">Minimum:</div>
<div class="t" style="left:-120.93px;width:400px;text-align:right;top:277.00px;font-size:9.6px;color:#18A050;font-weight:normal;letter-spacing:1.3px;-webkit-text-stroke:0.4px #18A050;transform:scaleX(0.82);transform-origin:right center;">0.00000</div>
<div class="t" style="left:85.71px;width:400px;text-align:center;top:282.00px;font-size:9.6px;color:#18A050;font-weight:normal;letter-spacing:1.0px;-webkit-text-stroke:0.4px #18A050;transform:scaleX(0.82);transform-origin:center center;">0</div>
<div class="t" style="left:138.36px;width:400px;text-align:center;top:282.00px;font-size:9.6px;color:#18A050;font-weight:normal;letter-spacing:1.0px;-webkit-text-stroke:0.4px #18A050;transform:scaleX(0.82);transform-origin:center center;">1000</div>
<div class="t" style="left:191.01px;width:400px;text-align:center;top:282.00px;font-size:9.6px;color:#18A050;font-weight:normal;letter-spacing:1.0px;-webkit-text-stroke:0.4px #18A050;transform:scaleX(0.82);transform-origin:center center;">2000</div>
<div class="t" style="left:243.66px;width:400px;text-align:center;top:282.00px;font-size:9.6px;color:#18A050;font-weight:normal;letter-spacing:1.0px;-webkit-text-stroke:0.4px #18A050;transform:scaleX(0.82);transform-origin:center center;">3000</div>
<div class="t" style="left:296.31px;width:400px;text-align:center;top:282.00px;font-size:9.6px;color:#18A050;font-weight:normal;letter-spacing:1.0px;-webkit-text-stroke:0.4px #18A050;transform:scaleX(0.82);transform-origin:center center;">4000</div>
<div class="t" style="left:348.96px;width:400px;text-align:center;top:282.00px;font-size:9.6px;color:#18A050;font-weight:normal;letter-spacing:1.0px;-webkit-text-stroke:0.4px #18A050;transform:scaleX(0.82);transform-origin:center center;">5000</div>
<div class="t" style="left:401.61px;width:400px;text-align:center;top:282.00px;font-size:9.6px;color:#18A050;font-weight:normal;letter-spacing:1.0px;-webkit-text-stroke:0.4px #18A050;transform:scaleX(0.82);transform-origin:center center;">6000</div>
<div class="t" style="left:454.26px;width:400px;text-align:center;top:282.00px;font-size:9.6px;color:#18A050;font-weight:normal;letter-spacing:1.0px;-webkit-text-stroke:0.4px #18A050;transform:scaleX(0.82);transform-origin:center center;">7000</div>
<div class="t" style="left:506.91px;width:400px;text-align:center;top:282.00px;font-size:9.6px;color:#18A050;font-weight:normal;letter-spacing:1.0px;-webkit-text-stroke:0.4px #18A050;transform:scaleX(0.82);transform-origin:center center;">8000</div>
<div class="t" style="left:559.56px;width:400px;text-align:center;top:282.00px;font-size:9.6px;color:#18A050;font-weight:normal;letter-spacing:1.0px;-webkit-text-stroke:0.4px #18A050;transform:scaleX(0.82);transform-origin:center center;">9000</div>
<div class="r" style="left:190px;top:304px;width:668px;height:100px;background:#000;box-shadow: inset 1px 1px 0 #8A887C, inset -1px -1px 0 #FFFFFF;"></div>
<div class="t" style="left:85.55px;width:400px;text-align:center;top:311.00px;font-size:9.6px;color:#18A050;font-weight:normal;letter-spacing:0.6px;-webkit-text-stroke:0.4px #18A050;transform:scaleX(0.82);transform-origin:center center;">dB</div>
<div class="t" style="left:-121.26px;width:400px;text-align:right;top:315.00px;font-size:9.6px;color:#18A050;font-weight:normal;letter-spacing:0.9px;-webkit-text-stroke:0.4px #18A050;transform:scaleX(0.82);transform-origin:right center;">Maximum:</div>
<div class="t" style="left:-120.93px;width:400px;text-align:right;top:324.00px;font-size:9.6px;color:#18A050;font-weight:normal;letter-spacing:1.3px;-webkit-text-stroke:0.4px #18A050;transform:scaleX(0.82);transform-origin:right center;">60.0</div>
<div class="t" style="left:-121.26px;width:400px;text-align:right;top:343.00px;font-size:9.6px;color:#18A050;font-weight:normal;letter-spacing:0.9px;-webkit-text-stroke:0.4px #18A050;transform:scaleX(0.82);transform-origin:right center;">Current:</div>
<div class="t" style="left:-120.93px;width:400px;text-align:right;top:352.00px;font-size:9.6px;color:#18A050;font-weight:normal;letter-spacing:1.3px;-webkit-text-stroke:0.4px #18A050;transform:scaleX(0.82);transform-origin:right center;">0.0</div>
<div class="t" style="left:-121.26px;width:400px;text-align:right;top:362.00px;font-size:9.6px;color:#18A050;font-weight:normal;letter-spacing:0.9px;-webkit-text-stroke:0.4px #18A050;transform:scaleX(0.82);transform-origin:right center;">dB</div>
<div class="t" style="left:-121.26px;width:400px;text-align:right;top:381.00px;font-size:9.6px;color:#18A050;font-weight:normal;letter-spacing:0.9px;-webkit-text-stroke:0.4px #18A050;transform:scaleX(0.82);transform-origin:right center;">Minimum:</div>
<div class="t" style="left:-120.93px;width:400px;text-align:right;top:391.00px;font-size:9.6px;color:#18A050;font-weight:normal;letter-spacing:1.3px;-webkit-text-stroke:0.4px #18A050;transform:scaleX(0.82);transform-origin:right center;">0.0</div>
<div class="t" style="left:85.71px;width:400px;text-align:center;top:395.00px;font-size:9.6px;color:#18A050;font-weight:normal;letter-spacing:1.0px;-webkit-text-stroke:0.4px #18A050;transform:scaleX(0.82);transform-origin:center center;">0</div>
<div class="t" style="left:138.36px;width:400px;text-align:center;top:395.00px;font-size:9.6px;color:#18A050;font-weight:normal;letter-spacing:1.0px;-webkit-text-stroke:0.4px #18A050;transform:scaleX(0.82);transform-origin:center center;">1000</div>
<div class="t" style="left:191.01px;width:400px;text-align:center;top:395.00px;font-size:9.6px;color:#18A050;font-weight:normal;letter-spacing:1.0px;-webkit-text-stroke:0.4px #18A050;transform:scaleX(0.82);transform-origin:center center;">2000</div>
<div class="t" style="left:243.66px;width:400px;text-align:center;top:395.00px;font-size:9.6px;color:#18A050;font-weight:normal;letter-spacing:1.0px;-webkit-text-stroke:0.4px #18A050;transform:scaleX(0.82);transform-origin:center center;">3000</div>
<div class="t" style="left:296.31px;width:400px;text-align:center;top:395.00px;font-size:9.6px;color:#18A050;font-weight:normal;letter-spacing:1.0px;-webkit-text-stroke:0.4px #18A050;transform:scaleX(0.82);transform-origin:center center;">4000</div>
<div class="t" style="left:348.96px;width:400px;text-align:center;top:395.00px;font-size:9.6px;color:#18A050;font-weight:normal;letter-spacing:1.0px;-webkit-text-stroke:0.4px #18A050;transform:scaleX(0.82);transform-origin:center center;">5000</div>
<div class="t" style="left:401.61px;width:400px;text-align:center;top:395.00px;font-size:9.6px;color:#18A050;font-weight:normal;letter-spacing:1.0px;-webkit-text-stroke:0.4px #18A050;transform:scaleX(0.82);transform-origin:center center;">6000</div>
<div class="t" style="left:454.26px;width:400px;text-align:center;top:395.00px;font-size:9.6px;color:#18A050;font-weight:normal;letter-spacing:1.0px;-webkit-text-stroke:0.4px #18A050;transform:scaleX(0.82);transform-origin:center center;">7000</div>
<div class="t" style="left:506.91px;width:400px;text-align:center;top:395.00px;font-size:9.6px;color:#18A050;font-weight:normal;letter-spacing:1.0px;-webkit-text-stroke:0.4px #18A050;transform:scaleX(0.82);transform-origin:center center;">8000</div>
<div class="t" style="left:559.56px;width:400px;text-align:center;top:395.00px;font-size:9.6px;color:#18A050;font-weight:normal;letter-spacing:1.0px;-webkit-text-stroke:0.4px #18A050;transform:scaleX(0.82);transform-origin:center center;">9000</div>
<div class="r" style="left:190px;top:418px;width:668px;height:99px;background:#000;box-shadow: inset 1px 1px 0 #8A887C, inset -1px -1px 0 #FFFFFF;"></div>
<div class="t" style="left:85.55px;width:400px;text-align:center;top:425.00px;font-size:9.6px;color:#18A050;font-weight:normal;letter-spacing:0.6px;-webkit-text-stroke:0.4px #18A050;transform:scaleX(0.82);transform-origin:center center;">dBm</div>
<div class="t" style="left:-121.26px;width:400px;text-align:right;top:429.00px;font-size:9.6px;color:#18A050;font-weight:normal;letter-spacing:0.9px;-webkit-text-stroke:0.4px #18A050;transform:scaleX(0.82);transform-origin:right center;">Maximum:</div>
<div class="t" style="left:-120.93px;width:400px;text-align:right;top:438.00px;font-size:9.6px;color:#18A050;font-weight:normal;letter-spacing:1.3px;-webkit-text-stroke:0.4px #18A050;transform:scaleX(0.82);transform-origin:right center;">-90.00</div>
<div class="t" style="left:-121.26px;width:400px;text-align:right;top:457.00px;font-size:9.6px;color:#18A050;font-weight:normal;letter-spacing:0.9px;-webkit-text-stroke:0.4px #18A050;transform:scaleX(0.82);transform-origin:right center;">Current:</div>
<div class="t" style="left:-120.93px;width:400px;text-align:right;top:466.00px;font-size:9.6px;color:#18A050;font-weight:normal;letter-spacing:1.3px;-webkit-text-stroke:0.4px #18A050;transform:scaleX(0.82);transform-origin:right center;">-90.00</div>
<div class="t" style="left:-121.26px;width:400px;text-align:right;top:475.00px;font-size:9.6px;color:#18A050;font-weight:normal;letter-spacing:0.9px;-webkit-text-stroke:0.4px #18A050;transform:scaleX(0.82);transform-origin:right center;">dBm</div>
<div class="t" style="left:-121.26px;width:400px;text-align:right;top:495.00px;font-size:9.6px;color:#18A050;font-weight:normal;letter-spacing:0.9px;-webkit-text-stroke:0.4px #18A050;transform:scaleX(0.82);transform-origin:right center;">Minimum:</div>
<div class="t" style="left:-120.93px;width:400px;text-align:right;top:504.00px;font-size:9.6px;color:#18A050;font-weight:normal;letter-spacing:1.3px;-webkit-text-stroke:0.4px #18A050;transform:scaleX(0.82);transform-origin:right center;">-130.00</div>
<div class="t" style="left:85.71px;width:400px;text-align:center;top:509.00px;font-size:9.6px;color:#18A050;font-weight:normal;letter-spacing:1.0px;-webkit-text-stroke:0.4px #18A050;transform:scaleX(0.82);transform-origin:center center;">0</div>
<div class="t" style="left:138.36px;width:400px;text-align:center;top:509.00px;font-size:9.6px;color:#18A050;font-weight:normal;letter-spacing:1.0px;-webkit-text-stroke:0.4px #18A050;transform:scaleX(0.82);transform-origin:center center;">1000</div>
<div class="t" style="left:191.01px;width:400px;text-align:center;top:509.00px;font-size:9.6px;color:#18A050;font-weight:normal;letter-spacing:1.0px;-webkit-text-stroke:0.4px #18A050;transform:scaleX(0.82);transform-origin:center center;">2000</div>
<div class="t" style="left:243.66px;width:400px;text-align:center;top:509.00px;font-size:9.6px;color:#18A050;font-weight:normal;letter-spacing:1.0px;-webkit-text-stroke:0.4px #18A050;transform:scaleX(0.82);transform-origin:center center;">3000</div>
<div class="t" style="left:296.31px;width:400px;text-align:center;top:509.00px;font-size:9.6px;color:#18A050;font-weight:normal;letter-spacing:1.0px;-webkit-text-stroke:0.4px #18A050;transform:scaleX(0.82);transform-origin:center center;">4000</div>
<div class="t" style="left:348.96px;width:400px;text-align:center;top:509.00px;font-size:9.6px;color:#18A050;font-weight:normal;letter-spacing:1.0px;-webkit-text-stroke:0.4px #18A050;transform:scaleX(0.82);transform-origin:center center;">5000</div>
<div class="t" style="left:401.61px;width:400px;text-align:center;top:509.00px;font-size:9.6px;color:#18A050;font-weight:normal;letter-spacing:1.0px;-webkit-text-stroke:0.4px #18A050;transform:scaleX(0.82);transform-origin:center center;">6000</div>
<div class="t" style="left:454.26px;width:400px;text-align:center;top:509.00px;font-size:9.6px;color:#18A050;font-weight:normal;letter-spacing:1.0px;-webkit-text-stroke:0.4px #18A050;transform:scaleX(0.82);transform-origin:center center;">7000</div>
<div class="t" style="left:506.91px;width:400px;text-align:center;top:509.00px;font-size:9.6px;color:#18A050;font-weight:normal;letter-spacing:1.0px;-webkit-text-stroke:0.4px #18A050;transform:scaleX(0.82);transform-origin:center center;">8000</div>
<div class="t" style="left:559.56px;width:400px;text-align:center;top:509.00px;font-size:9.6px;color:#18A050;font-weight:normal;letter-spacing:1.0px;-webkit-text-stroke:0.4px #18A050;transform:scaleX(0.82);transform-origin:center center;">9000</div>
<div class="r" style="left:190px;top:531px;width:668px;height:100px;background:#000;box-shadow: inset 1px 1px 0 #8A887C, inset -1px -1px 0 #FFFFFF;"></div>
<div class="t" style="left:85.55px;width:400px;text-align:center;top:538.00px;font-size:9.6px;color:#18A050;font-weight:normal;letter-spacing:0.6px;-webkit-text-stroke:0.4px #18A050;transform:scaleX(0.82);transform-origin:center center;">deg</div>
<div class="t" style="left:-121.26px;width:400px;text-align:right;top:542.00px;font-size:9.6px;color:#18A050;font-weight:normal;letter-spacing:0.9px;-webkit-text-stroke:0.4px #18A050;transform:scaleX(0.82);transform-origin:right center;">Maximum:</div>
<div class="t" style="left:-120.93px;width:400px;text-align:right;top:551.00px;font-size:9.6px;color:#18A050;font-weight:normal;letter-spacing:1.3px;-webkit-text-stroke:0.4px #18A050;transform:scaleX(0.82);transform-origin:right center;">200.00</div>
<div class="t" style="left:-121.26px;width:400px;text-align:right;top:570.00px;font-size:9.6px;color:#18A050;font-weight:normal;letter-spacing:0.9px;-webkit-text-stroke:0.4px #18A050;transform:scaleX(0.82);transform-origin:right center;">Current:</div>
<div class="t" style="left:-120.93px;width:400px;text-align:right;top:579.00px;font-size:9.6px;color:#18A050;font-weight:normal;letter-spacing:1.3px;-webkit-text-stroke:0.4px #18A050;transform:scaleX(0.82);transform-origin:right center;">0.00</div>
<div class="t" style="left:-121.26px;width:400px;text-align:right;top:589.00px;font-size:9.6px;color:#18A050;font-weight:normal;letter-spacing:0.9px;-webkit-text-stroke:0.4px #18A050;transform:scaleX(0.82);transform-origin:right center;">deg</div>
<div class="t" style="left:-121.26px;width:400px;text-align:right;top:608.00px;font-size:9.6px;color:#18A050;font-weight:normal;letter-spacing:0.9px;-webkit-text-stroke:0.4px #18A050;transform:scaleX(0.82);transform-origin:right center;">Minimum:</div>
<div class="t" style="left:-120.93px;width:400px;text-align:right;top:618.00px;font-size:9.6px;color:#18A050;font-weight:normal;letter-spacing:1.3px;-webkit-text-stroke:0.4px #18A050;transform:scaleX(0.82);transform-origin:right center;">0.00</div>
<div class="t" style="left:85.71px;width:400px;text-align:center;top:622.00px;font-size:9.6px;color:#18A050;font-weight:normal;letter-spacing:1.0px;-webkit-text-stroke:0.4px #18A050;transform:scaleX(0.82);transform-origin:center center;">0</div>
<div class="t" style="left:138.36px;width:400px;text-align:center;top:622.00px;font-size:9.6px;color:#18A050;font-weight:normal;letter-spacing:1.0px;-webkit-text-stroke:0.4px #18A050;transform:scaleX(0.82);transform-origin:center center;">1000</div>
<div class="t" style="left:191.01px;width:400px;text-align:center;top:622.00px;font-size:9.6px;color:#18A050;font-weight:normal;letter-spacing:1.0px;-webkit-text-stroke:0.4px #18A050;transform:scaleX(0.82);transform-origin:center center;">2000</div>
<div class="t" style="left:243.66px;width:400px;text-align:center;top:622.00px;font-size:9.6px;color:#18A050;font-weight:normal;letter-spacing:1.0px;-webkit-text-stroke:0.4px #18A050;transform:scaleX(0.82);transform-origin:center center;">3000</div>
<div class="t" style="left:296.31px;width:400px;text-align:center;top:622.00px;font-size:9.6px;color:#18A050;font-weight:normal;letter-spacing:1.0px;-webkit-text-stroke:0.4px #18A050;transform:scaleX(0.82);transform-origin:center center;">4000</div>
<div class="t" style="left:348.96px;width:400px;text-align:center;top:622.00px;font-size:9.6px;color:#18A050;font-weight:normal;letter-spacing:1.0px;-webkit-text-stroke:0.4px #18A050;transform:scaleX(0.82);transform-origin:center center;">5000</div>
<div class="t" style="left:401.61px;width:400px;text-align:center;top:622.00px;font-size:9.6px;color:#18A050;font-weight:normal;letter-spacing:1.0px;-webkit-text-stroke:0.4px #18A050;transform:scaleX(0.82);transform-origin:center center;">6000</div>
<div class="t" style="left:454.26px;width:400px;text-align:center;top:622.00px;font-size:9.6px;color:#18A050;font-weight:normal;letter-spacing:1.0px;-webkit-text-stroke:0.4px #18A050;transform:scaleX(0.82);transform-origin:center center;">7000</div>
<div class="t" style="left:506.91px;width:400px;text-align:center;top:622.00px;font-size:9.6px;color:#18A050;font-weight:normal;letter-spacing:1.0px;-webkit-text-stroke:0.4px #18A050;transform:scaleX(0.82);transform-origin:center center;">8000</div>
<div class="t" style="left:559.56px;width:400px;text-align:center;top:622.00px;font-size:9.6px;color:#18A050;font-weight:normal;letter-spacing:1.0px;-webkit-text-stroke:0.4px #18A050;transform:scaleX(0.82);transform-origin:center center;">9000</div>
<div class="r" style="left:190px;top:645px;width:668px;height:99px;background:#000;box-shadow: inset 1px 1px 0 #8A887C, inset -1px -1px 0 #FFFFFF;"></div>
<div class="t" style="left:207.00px;top:664.00px;font-size:10.8px;color:#15904C;font-weight:bold;">Select a Parameter Type to Display</div>
<svg style="position:absolute;left:0;top:0;z-index:2" width="1000" height="782"><g stroke="#117C44" stroke-width="1.3" stroke-dasharray="2.1 2.6"><line x1="287.3" y1="115.5" x2="811.8" y2="115.5"/><line x1="287.3" y1="139.5" x2="811.8" y2="139.5"/><line x1="337.5" y1="91" x2="337.5" y2="163.3"/><line x1="390.5" y1="91" x2="390.5" y2="163.3"/><line x1="443.5" y1="91" x2="443.5" y2="163.3"/><line x1="495.5" y1="91" x2="495.5" y2="163.3"/><line x1="548.5" y1="91" x2="548.5" y2="163.3"/><line x1="601.5" y1="91" x2="601.5" y2="163.3"/><line x1="653.5" y1="91" x2="653.5" y2="163.3"/><line x1="706.5" y1="91" x2="706.5" y2="163.3"/><line x1="759.5" y1="91" x2="759.5" y2="163.3"/></g><rect x="284" y="87" width="2.6" height="76.30000000000001" fill="#5E0505"/><line x1="285.3" y1="163.5" x2="811.8" y2="163.5" stroke="#16894A" stroke-width="1.2"/><line x1="285.3" y1="103" x2="285.3" y2="163.3" stroke="#0E9A16" stroke-width="1.6"/><line x1="285.3" y1="163.3" x2="811.8" y2="163.3" stroke="#0E9A16" stroke-width="1.6"/><g stroke="#117C44" stroke-width="1.3" stroke-dasharray="2.1 2.6"><line x1="287.3" y1="204.5" x2="811.8" y2="204.5"/><line x1="287.3" y1="228.5" x2="811.8" y2="228.5"/><line x1="287.3" y1="252.5" x2="811.8" y2="252.5"/><line x1="337.5" y1="204" x2="337.5" y2="276.7"/><line x1="390.5" y1="204" x2="390.5" y2="276.7"/><line x1="443.5" y1="204" x2="443.5" y2="276.7"/><line x1="495.5" y1="204" x2="495.5" y2="276.7"/><line x1="548.5" y1="204" x2="548.5" y2="276.7"/><line x1="601.5" y1="204" x2="601.5" y2="276.7"/><line x1="653.5" y1="204" x2="653.5" y2="276.7"/><line x1="706.5" y1="204" x2="706.5" y2="276.7"/><line x1="759.5" y1="204" x2="759.5" y2="276.7"/></g><rect x="284" y="200" width="2.6" height="76.69999999999999" fill="#5E0505"/><line x1="285.3" y1="276.5" x2="811.8" y2="276.5" stroke="#16894A" stroke-width="1.2"/><polyline points="285.3,276.7 601.2,204.5 811.8,252.63333333333333" fill="none" stroke="#16BC16" stroke-width="1.3"/><g stroke="#117C44" stroke-width="1.3" stroke-dasharray="2.1 2.6"><line x1="287.3" y1="317.5" x2="811.8" y2="317.5"/><line x1="287.3" y1="341.5" x2="811.8" y2="341.5"/><line x1="287.3" y1="366.5" x2="811.8" y2="366.5"/><line x1="337.5" y1="318" x2="337.5" y2="390.09999999999997"/><line x1="390.5" y1="318" x2="390.5" y2="390.09999999999997"/><line x1="443.5" y1="318" x2="443.5" y2="390.09999999999997"/><line x1="495.5" y1="318" x2="495.5" y2="390.09999999999997"/><line x1="548.5" y1="318" x2="548.5" y2="390.09999999999997"/><line x1="601.5" y1="318" x2="601.5" y2="390.09999999999997"/><line x1="653.5" y1="318" x2="653.5" y2="390.09999999999997"/><line x1="706.5" y1="318" x2="706.5" y2="390.09999999999997"/><line x1="759.5" y1="318" x2="759.5" y2="390.09999999999997"/></g><rect x="284" y="313" width="2.6" height="77.09999999999997" fill="#5E0505"/><line x1="285.3" y1="390.5" x2="811.8" y2="390.5" stroke="#16894A" stroke-width="1.2"/><polyline points="285.3,390.1 316.9,317.9 316.9,390.1 348.5,317.9 348.5,390.1 380.1,317.9 380.1,390.1 411.7,317.9 411.7,390.1 443.2,317.9 443.2,390.1 474.8,317.9 474.8,390.1 506.4,317.9 506.4,390.1 538.0,317.9 538.0,390.1 569.6,317.9 569.6,390.1 601.2,317.9 601.2,390.1 632.8,317.9 632.8,390.1 664.4,317.9 664.4,390.1 696.0,317.9 696.0,390.1 727.6,317.9 727.6,390.1 759.1,317.9 759.1,390.1 790.7,317.9 790.7,390.1 811.8,342.0" fill="none" stroke="#16BC16" stroke-width="1.5"/><g stroke="#117C44" stroke-width="1.3" stroke-dasharray="2.1 2.6"><line x1="287.3" y1="431.5" x2="811.8" y2="431.5"/><line x1="287.3" y1="449.5" x2="811.8" y2="449.5"/><line x1="287.3" y1="467.5" x2="811.8" y2="467.5"/><line x1="287.3" y1="485.5" x2="811.8" y2="485.5"/><line x1="337.5" y1="431" x2="337.5" y2="503.50000000000006"/><line x1="390.5" y1="431" x2="390.5" y2="503.50000000000006"/><line x1="443.5" y1="431" x2="443.5" y2="503.50000000000006"/><line x1="495.5" y1="431" x2="495.5" y2="503.50000000000006"/><line x1="548.5" y1="431" x2="548.5" y2="503.50000000000006"/><line x1="601.5" y1="431" x2="601.5" y2="503.50000000000006"/><line x1="653.5" y1="431" x2="653.5" y2="503.50000000000006"/><line x1="706.5" y1="431" x2="706.5" y2="503.50000000000006"/><line x1="759.5" y1="431" x2="759.5" y2="503.50000000000006"/></g><rect x="284" y="427" width="2.6" height="76.50000000000006" fill="#5E0505"/><line x1="285.3" y1="503.5" x2="811.8" y2="503.5" stroke="#16894A" stroke-width="1.2"/><polyline points="285.8,502.0 285.8,431.3 286.3,431.3 286.3,502.0 288.8,502.0 288.8,431.3 290.2,431.3 290.6,502.0 291.4,440.3 292,502.0 292.8,431.3 294.2,431.3 294.6,502.0 295.3,446.3 296,502.0" fill="none" stroke="#14B414" stroke-width="1.2"/><line x1="296" y1="502.00000000000006" x2="811.8" y2="502.00000000000006" stroke="#0A8A14" stroke-width="2.2"/><g stroke="#117C44" stroke-width="1.3" stroke-dasharray="2.1 2.6"><line x1="287.3" y1="544.5" x2="811.8" y2="544.5"/><line x1="287.3" y1="562.5" x2="811.8" y2="562.5"/><line x1="287.3" y1="580.5" x2="811.8" y2="580.5"/><line x1="287.3" y1="598.5" x2="811.8" y2="598.5"/><line x1="337.5" y1="545" x2="337.5" y2="616.9000000000001"/><line x1="390.5" y1="545" x2="390.5" y2="616.9000000000001"/><line x1="443.5" y1="545" x2="443.5" y2="616.9000000000001"/><line x1="495.5" y1="545" x2="495.5" y2="616.9000000000001"/><line x1="548.5" y1="545" x2="548.5" y2="616.9000000000001"/><line x1="601.5" y1="545" x2="601.5" y2="616.9000000000001"/><line x1="653.5" y1="545" x2="653.5" y2="616.9000000000001"/><line x1="706.5" y1="545" x2="706.5" y2="616.9000000000001"/><line x1="759.5" y1="545" x2="759.5" y2="616.9000000000001"/></g><rect x="284" y="540" width="2.6" height="76.90000000000009" fill="#5E0505"/><line x1="285.3" y1="616.5" x2="811.8" y2="616.5" stroke="#16894A" stroke-width="1.2"/><rect x="284" y="551.9" width="527.8" height="65.0" fill="#00C400"/></svg>
<div class="t" style="left:187.50px;top:756.00px;font-size:8.65px;color:#1A1A1A;font-weight:normal;-webkit-text-stroke:0.15px #333;">* * * Double-click on a graph to expand the plot in a floating window</div>
<div class="r" style="left:481px;top:748px;width:87px;height:18px;background:#EDEADA;box-shadow: inset 1px 1px 0 #FFFFFF, inset -1px -1px 0 #716F64, inset -2px -2px 0 #ACA899;"></div>
<div class="t" style="left:324.50px;width:400px;text-align:center;top:758.00px;font-size:8.2px;color:#1A1A1A;font-weight:normal;-webkit-text-stroke:0.15px #333;">Zoom In</div>
<div class="t" style="left:736.71px;width:400px;text-align:center;top:34.00px;font-size:8.2px;color:#1A1A1A;font-weight:normal;letter-spacing:0.22px;-webkit-text-stroke:0.15px #333;">Interface Name</div>
<div class="r" style="left:890.5px;top:41.5px;width:95.5px;height:54.0px;background:#FFFFFF;box-shadow: inset 1px 1px 0 #7F7D70, inset 2px 2px 0 #A3A195, inset -1px -1px 0 #F4F2EA;"></div>
<div class="r" style="left:892px;top:43px;width:92px;height:12.5px;background:#316AC5;"></div>
<div class="r" style="left:893px;top:45.5px;width:8.5px;height:8.5px;background:#FFFFFF;box-shadow: inset 0 0 0 0.6px #1C3F7A;"></div>
<svg style="position:absolute;left:893px;top:45.5px;z-index:3" width="9" height="9"><path d="M1.6 4.3 L3.6 6.5 L7.6 1.8" fill="none" stroke="#000" stroke-width="1.6"/></svg>
<div class="r" style="left:892px;top:43px;width:92px;height:12.5px;background:transparent;border:1px dotted #7FA0E0;"></div>
<div class="r" style="left:902px;top:43.5px;width:1px;height:12.0px;background:#A8C4F0;"></div>
<div class="t" style="left:903.50px;top:51.00px;font-size:8.2px;color:#fff;font-weight:normal;letter-spacing:-0.3px;">ACE_1</div>
<div class="r" style="left:897.3px;top:100.4px;width:81.5px;height:17.599999999999994px;background:#EDEADA;box-shadow: inset 1px 1px 0 #FFFFFF, inset -1px -1px 0 #6F6D62, inset -2px -2px 0 #B5B2A4;"></div>
<div class="t" style="left:738.05px;width:400px;text-align:center;top:110.00px;font-size:8.2px;color:#1A1A1A;font-weight:normal;-webkit-text-stroke:0.15px #333;">Disconnect</div>
<div class="t" style="left:737.37px;width:400px;text-align:center;top:132.00px;font-size:8.2px;color:#1A1A1A;font-weight:normal;letter-spacing:0.33px;-webkit-text-stroke:0.15px #333;">Interface Status</div>
<div class="r" style="left:901px;top:139.2px;width:74px;height:15.800000000000011px;background:#80FF80;"></div>
<div class="t" style="left:737.38px;width:400px;text-align:center;top:146.00px;font-size:8.2px;color:#1A1A1A;font-weight:normal;letter-spacing:0.15px;-webkit-text-stroke:0.15px #333;">Connected</div>
<svg style="position:absolute;left:979px;top:140.5px;z-index:3" width="12" height="12"><circle cx="6" cy="6" r="5" fill="#0F4A0F"/><circle cx="6" cy="6" r="4" fill="#10D810"/><circle cx="5" cy="5" r="1.6" fill="#7CF87C"/></svg>
<div class="t" style="left:738.91px;width:400px;text-align:center;top:188.00px;font-size:8.2px;color:#1A1A1A;font-weight:normal;letter-spacing:0.22px;-webkit-text-stroke:0.15px #333;">Version: 1.014</div>
<div class="t" style="left:738.85px;width:400px;text-align:center;top:198.00px;font-size:8.2px;color:#1A1A1A;font-weight:normal;letter-spacing:0.11px;-webkit-text-stroke:0.15px #333;">SN: 0417-010-00000</div>
<div class="t" style="left:738.80px;width:400px;text-align:center;top:208.00px;font-size:8.2px;color:#1A1A1A;font-weight:normal;-webkit-text-stroke:0.15px #333;">Model: ACE9600-1-PROTO</div>
<div class="t" style="left:736.90px;width:400px;text-align:center;top:266.00px;font-size:8.6px;color:#1A1A1A;font-weight:bold;-webkit-text-stroke:0.15px #333;">Mode</div>
<div class="r" style="left:899.8px;top:276.2px;width:75.20000000000005px;height:14.800000000000011px;background:#FFFFFF;box-shadow: inset 1px 1px 0 #7F7D70, inset 1.5px 1.5px 0 #9A988B, inset -1px -1px 0 #FFFFFF;"></div>
<div class="r" style="left:961.5px;top:277.7px;width:12.5px;height:11.800000000000011px;background:#EDEADA;box-shadow: inset -1px -1px 0 #77756A, inset 1px 1px 0 #F4F3EC;"></div>
<svg style="position:absolute;left:964.25px;top:282.60px" width="6" height="4"><path d="M0 0 L6 0 L3 3.6 Z" fill="#000"/></svg>
<div class="t" style="left:903.80px;top:285.00px;font-size:8.2px;color:#1A1A1A;font-weight:normal;-webkit-text-stroke:0.15px #333;">Dynamic</div>
<div class="r" style="left:891.3px;top:295.4px;width:17.100000000000023px;height:15.100000000000023px;background:#EDEADA;box-shadow: inset 1px 1px 0 #FFFFFF, inset -1px -1px 0 #6F6D62, inset -2px -2px 0 #B5B2A4;"></div>
<div class="r" style="left:909.7px;top:295.4px;width:17.299999999999955px;height:15.100000000000023px;background:#EDEADA;box-shadow: inset 1px 1px 0 #FFFFFF, inset -1px -1px 0 #6F6D62, inset -2px -2px 0 #B5B2A4;"></div>
<div class="r" style="left:928.6px;top:295.4px;width:17.299999999999955px;height:15.100000000000023px;background:#EDEADA;box-shadow: inset 1px 1px 0 #FFFFFF, inset -1px -1px 0 #6F6D62, inset -2px -2px 0 #B5B2A4;"></div>
<div class="r" style="left:947.1px;top:295.4px;width:17.299999999999955px;height:15.100000000000023px;background:#EDEADA;box-shadow: inset 1px 1px 0 #FFFFFF, inset -1px -1px 0 #6F6D62, inset -2px -2px 0 #B5B2A4;"></div>
<div class="r" style="left:965.9px;top:295.4px;width:17.399999999999977px;height:15.100000000000023px;background:#EDEADA;box-shadow: inset 1px 1px 0 #FFFFFF, inset -1px -1px 0 #6F6D62, inset -2px -2px 0 #B5B2A4;"></div>
<svg style="position:absolute;left:891.3px;top:296.2px;z-index:3" width="18" height="15"><path d="M3.7 2.6 h2.5 v9 h-2.5 z M13.7 2.6 v9 L6.4 7.1 z" fill="#A9A699"/></svg>
<svg style="position:absolute;left:909.7px;top:296.2px;z-index:3" width="18" height="15"><path d="M3.3 2.6 h2.6 v9 h-2.6 z M14.3 2.6 v9 L5.9 7.1 z" fill="#000"/></svg>
<svg style="position:absolute;left:928.6px;top:296.2px;z-index:3" width="18" height="15"><path d="M3.9 2.6 L13.9 7.1 L3.9 11.6 z" fill="#000"/></svg>
<svg style="position:absolute;left:947.1px;top:296.2px;z-index:3" width="18" height="15"><path d="M5.9 3 h2.5 v8.6 h-2.5 z M9.9 3 h2.5 v8.6 h-2.5 z" fill="#A9A699"/></svg>
<svg style="position:absolute;left:965.9px;top:296.2px;z-index:3" width="18" height="15"><path d="M11.1 2.6 h2.9 v9 h-2.9 z M3.6 2.6 v9 L11.1 7.1 z" fill="#000"/></svg>
<div class="t" style="left:736.90px;width:400px;text-align:center;top:318.00px;font-size:8.2px;color:#1A1A1A;font-weight:normal;-webkit-text-stroke:0.15px #333;">Ready</div>
<div class="r" style="left:891.8px;top:327.4px;width:90.70000000000005px;height:16.600000000000023px;background:#D9D7E8;box-shadow: inset 1px 1px 0 #FFFFFF, inset -1px -1px 0 #6F6D62, inset -2px -2px 0 #B5B2A4;"></div>
<div class="t" style="left:737.15px;width:400px;text-align:center;top:335.00px;font-size:8.9px;color:#1A1A1A;font-weight:bold;-webkit-text-stroke:0.15px #333;">Dynamic Setup...</div>
<div class="t" style="left:737.50px;width:400px;text-align:center;top:353.00px;font-size:8.2px;color:#1A1A1A;font-weight:normal;-webkit-text-stroke:0.15px #333;">Trigger</div>
<div class="r" style="left:900px;top:359.4px;width:75.5px;height:16.900000000000034px;background:#DAD8E8;box-shadow: inset 1px 1px 0 #6F6D62, inset 1.6px 1.6px 0 #8A887C, inset -1px -1px 0 #FFFFFF;"></div>
<div class="t" style="left:904.30px;top:368.00px;font-size:8.2px;color:#1A1A1A;font-weight:normal;-webkit-text-stroke:0.15px #333;">Internal</div>
<div class="t" style="left:737.50px;width:400px;text-align:center;top:387.00px;font-size:8.2px;color:#1A1A1A;font-weight:normal;-webkit-text-stroke:0.15px #333;">Update</div>
<div class="r" style="left:900px;top:394.3px;width:75.5px;height:16.5px;background:#DAD8E8;box-shadow: inset 1px 1px 0 #6F6D62, inset 1.6px 1.6px 0 #8A887C, inset -1px -1px 0 #FFFFFF;"></div>
<div class="t" style="left:904.30px;top:403.00px;font-size:8.2px;color:#1A1A1A;font-weight:normal;-webkit-text-stroke:0.15px #333;">Internal</div>
<div class="t" style="left:737.57px;width:400px;text-align:center;top:426.00px;font-size:8.2px;color:#1A1A1A;font-weight:normal;letter-spacing:0.14px;-webkit-text-stroke:0.15px #333;">Update Rate (msec)</div>
<div class="r" style="left:900px;top:432.1px;width:75.5px;height:16.5px;background:#DAD8E8;box-shadow: inset 1px 1px 0 #6F6D62, inset 1.6px 1.6px 0 #8A887C, inset -1px -1px 0 #FFFFFF;"></div>
<div class="t" style="left:904.30px;top:441.00px;font-size:8.2px;color:#1A1A1A;font-weight:normal;-webkit-text-stroke:0.15px #333;">1</div>
<div class="t" style="left:737.58px;width:400px;text-align:center;top:463.00px;font-size:8.2px;color:#1A1A1A;font-weight:normal;letter-spacing:0.15px;-webkit-text-stroke:0.15px #333;">RF Interval (msec)</div>
<div class="r" style="left:900px;top:470.9px;width:75.5px;height:16.100000000000023px;background:#DAD8E8;box-shadow: inset 1px 1px 0 #6F6D62, inset 1.6px 1.6px 0 #8A887C, inset -1px -1px 0 #FFFFFF;"></div>
<div class="t" style="left:904.30px;top:480.00px;font-size:8.2px;color:#1A1A1A;font-weight:normal;-webkit-text-stroke:0.15px #333;">100</div>
<div class="t" style="left:736.10px;width:400px;text-align:center;top:499.00px;font-size:8.2px;color:#1A1A1A;font-weight:normal;letter-spacing:0.2px;-webkit-text-stroke:0.15px #333;">MPath Interval (msec)</div>
<div class="r" style="left:900px;top:506.3px;width:75.5px;height:16.30000000000001px;background:#DAD8E8;box-shadow: inset 1px 1px 0 #6F6D62, inset 1.6px 1.6px 0 #8A887C, inset -1px -1px 0 #FFFFFF;"></div>
<div class="t" style="left:904.30px;top:515.00px;font-size:8.2px;color:#1A1A1A;font-weight:normal;-webkit-text-stroke:0.15px #333;">100</div>
<div class="t" style="left:737.50px;width:400px;text-align:center;top:534.00px;font-size:8.2px;color:#1A1A1A;font-weight:normal;-webkit-text-stroke:0.15px #333;">Loop</div>
<div class="r" style="left:900px;top:540px;width:75.5px;height:16.799999999999955px;background:#DAD8E8;box-shadow: inset 1px 1px 0 #6F6D62, inset 1.6px 1.6px 0 #8A887C, inset -1px -1px 0 #FFFFFF;"></div>
<div class="t" style="left:904.30px;top:549.00px;font-size:8.2px;color:#1A1A1A;font-weight:normal;-webkit-text-stroke:0.15px #333;">Single</div>
<div class="t" style="left:737.50px;width:400px;text-align:center;top:571.00px;font-size:8.2px;color:#1A1A1A;font-weight:normal;-webkit-text-stroke:0.15px #333;">Multi Chassis Sync</div>
<div class="r" style="left:900px;top:577.1px;width:75.5px;height:16.799999999999955px;background:#DAD8E8;box-shadow: inset 1px 1px 0 #6F6D62, inset 1.6px 1.6px 0 #8A887C, inset -1px -1px 0 #FFFFFF;"></div>
<div class="t" style="left:904.30px;top:586.00px;font-size:8.2px;color:#1A1A1A;font-weight:normal;-webkit-text-stroke:0.15px #333;">StandAlone</div>
<div class="t" style="left:737.59px;width:400px;text-align:center;top:608.00px;font-size:8.2px;color:#1A1A1A;font-weight:normal;letter-spacing:0.17px;-webkit-text-stroke:0.15px #333;">Start Time (sec)</div>
<div class="r" style="left:900px;top:614.2px;width:75.5px;height:16.5px;background:#DAD8E8;box-shadow: inset 1px 1px 0 #6F6D62, inset 1.6px 1.6px 0 #8A887C, inset -1px -1px 0 #FFFFFF;"></div>
<div class="t" style="left:904.30px;top:623.00px;font-size:8.2px;color:#1A1A1A;font-weight:normal;-webkit-text-stroke:0.15px #333;">0</div>
<div class="t" style="left:736.50px;width:400px;text-align:center;top:644.00px;font-size:8.2px;color:#1A1A1A;font-weight:normal;-webkit-text-stroke:0.15px #333;">Elapsed Time (sec)</div>
<div class="r" style="left:900.5px;top:651px;width:74.5px;height:15px;background:#000;box-shadow: inset -1px -1px 0 #FFFFFF;"></div>
<div class="t" style="left:904.00px;top:659.00px;font-size:8.2px;color:#D8D8D8;font-weight:normal;">0.000</div>
<div class="r" style="left:896.5px;top:677.2px;width:83.79999999999995px;height:17.09999999999991px;background:#EDEADA;box-shadow: inset 1px 1px 0 #FFFFFF, inset -1px -1px 0 #6F6D62, inset -2px -2px 0 #B5B2A4;"></div>
<div class="t" style="left:738.40px;width:400px;text-align:center;top:687.00px;font-size:8.2px;color:#1A1A1A;font-weight:normal;-webkit-text-stroke:0.15px #333;">Show Debug Tabs</div>
<div class="r" style="left:896.5px;top:697.5px;width:83.79999999999995px;height:17.299999999999955px;background:#EDEADA;box-shadow: inset 1px 1px 0 #FFFFFF, inset -1px -1px 0 #6F6D62, inset -2px -2px 0 #B5B2A4;"></div>
<div class="t" style="left:738.40px;width:400px;text-align:center;top:707.00px;font-size:8.2px;color:#1A1A1A;font-weight:normal;-webkit-text-stroke:0.15px #333;">Load Config...</div>
<div class="r" style="left:896.5px;top:718px;width:83.79999999999995px;height:17.299999999999955px;background:#EDEADA;box-shadow: inset 1px 1px 0 #FFFFFF, inset -1px -1px 0 #6F6D62, inset -2px -2px 0 #B5B2A4;"></div>
<div class="t" style="left:738.40px;width:400px;text-align:center;top:728.00px;font-size:8.2px;color:#1A1A1A;font-weight:normal;-webkit-text-stroke:0.15px #333;">Save Config...</div>
<div class="r" style="left:896.5px;top:738.5px;width:83.79999999999995px;height:17.200000000000045px;background:#EDEADA;box-shadow: inset 1px 1px 0 #FFFFFF, inset -1px -1px 0 #6F6D62, inset -2px -2px 0 #B5B2A4;"></div>
<div class="t" style="left:738.40px;width:400px;text-align:center;top:748.00px;font-size:8.2px;color:#1A1A1A;font-weight:normal;-webkit-text-stroke:0.15px #333;">Preferences...</div>
<div class="r" style="left:896.5px;top:758.2px;width:83.79999999999995px;height:17.799999999999955px;background:#EDEADA;box-shadow: inset 1px 1px 0 #FFFFFF, inset -1px -1px 0 #6F6D62, inset -2px -2px 0 #B5B2A4;"></div>
<div class="t" style="left:738.40px;width:400px;text-align:center;top:768.00px;font-size:8.2px;color:#1A1A1A;font-weight:normal;-webkit-text-stroke:0.15px #333;">Exit</div>
<svg style="position:absolute;left:985px;top:768px;z-index:3" width="11" height="11"><path d="M10 2 L2 10 M10 5 L5 10 M10 8 L8 10" stroke="#B8B5A6" stroke-width="1"/></svg>
</body></html>
